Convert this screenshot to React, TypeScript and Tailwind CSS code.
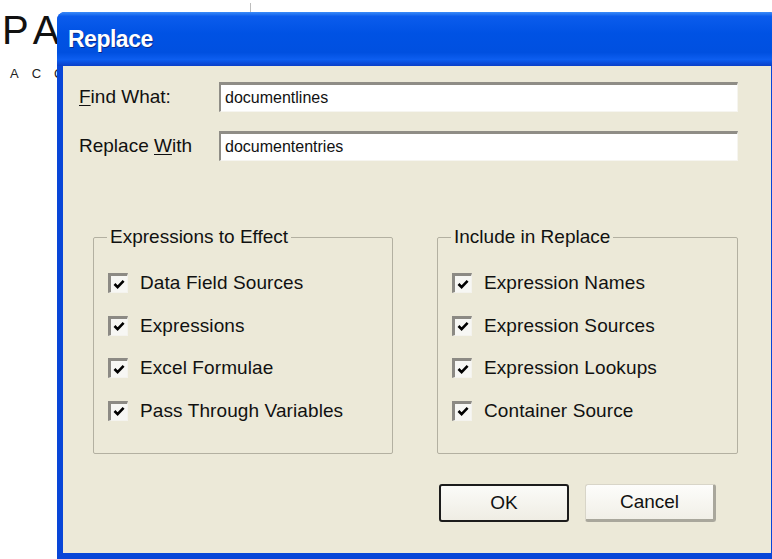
import React from "react";

const sans = "font-['Liberation_Sans',Arial,sans-serif]";

function CheckBox() {
  return (
    <span className="flex h-[20px] w-[20px] shrink-0 items-center justify-center border-t-[3px] border-l-[3px] border-b border-r border-t-[#8c8a84] border-l-[#8c8a84] border-b-[#f4f3ee] border-r-[#f4f3ee] bg-[#f7f7f4]">
      <svg width="12" height="11" viewBox="0 0 12 11">
        <path d="M1.5 5 L4.6 8.2 L10.6 1.8" fill="none" stroke="#000" strokeWidth="2.6" />
      </svg>
    </span>
  );
}

function CheckRow({ label }: { label: string }) {
  return (
    <div className="flex h-[42.5px] items-center gap-[12px]">
      <CheckBox />
      <span className="text-[19px] tracking-[0.1px] text-[#111]">{label}</span>
    </div>
  );
}

function GroupBox({ title, items, width }: { title: string; items: string[]; width: string }) {
  return (
    <fieldset className={`${width} h-[228px] rounded-[2px] border border-[#b3b0a1] pt-[14px]`}>
      <legend className="ml-[13px] px-[3px] text-[19px] leading-[22px] text-[#111]">{title}</legend>
      <div className="pl-[14px]">
        {items.map((it) => (
          <CheckRow key={it} label={it} />
        ))}
      </div>
    </fieldset>
  );
}

function TextBox({ value }: { value: string }) {
  return (
    <div className="flex h-[30px] w-[519px] items-center border-t-[3px] border-l-2 border-b border-r border-t-[#8f8d86] border-l-[#8f8d86] border-b-[#f6f5f0] border-r-[#f6f5f0] bg-white pl-[4px] text-[16px] text-[#111]">
      {value}
    </div>
  );
}

export default function App() {
  return (
    <div className={`relative h-[559px] w-[772px] overflow-hidden bg-white ${sans}`}>
      {/* product logo behind the window */}
      <div className="pl-[2px] pt-[9px]">
        <div className="text-[40px] font-light leading-[42px] tracking-[7px] text-[#111]">PASTEL</div>
        <div className="mt-[15px] pl-[8px] text-[13px] leading-[16px] tracking-[13px] text-[#222]">ACCOUNTING</div>
      </div>
      <div className="absolute left-[250px] top-[3px] h-[10px] w-px bg-[#bdbdbd]" />

      {/* Replace dialog */}
      <div className="absolute left-[57px] top-[12px] flex h-[547px] w-[720px] flex-col overflow-hidden rounded-t-[8px] bg-[#0846d8]">
        <div className="flex h-[54px] shrink-0 items-center bg-[linear-gradient(180deg,#3b8cf8_0%,#0b5cec_8%,#0052e4_40%,#0050e0_75%,#0d5ef0_88%,#0a3fc8_100%)] pl-[11px]">
          <span className="text-[23px] font-bold tracking-[-0.5px] text-white [text-shadow:1px_1px_0_#0a2a8a]">
            Replace
          </span>
        </div>
        <div className="mx-[6px] mb-[6px] flex-1 bg-[#ece9d8] pl-4 pt-4">
          <div className="flex items-center">
            <span className="w-[140px] text-[19px] text-[#111]">
              <span className="underline underline-offset-2">F</span>ind What:
            </span>
            <TextBox value="documentlines" />
          </div>
          <div className="mt-[19px] flex items-center">
            <span className="w-[140px] text-[19px] text-[#111]">
              Replace <span className="underline underline-offset-2">W</span>ith
            </span>
            <TextBox value="documententries" />
          </div>

          <div className="ml-[14px] mt-[65px] flex gap-[44px]">
            <GroupBox
              width="w-[300px]"
              title="Expressions to Effect"
              items={["Data Field Sources", "Expressions", "Excel Formulae", "Pass Through Variables"]}
            />
            <GroupBox
              width="w-[301px]"
              title="Include in Replace"
              items={["Expression Names", "Expression Sources", "Expression Lookups", "Container Source"]}
            />
          </div>

          <div className="ml-[360px] mt-[30px] flex gap-[16px]">
            <button className="flex h-[38px] w-[130px] items-center justify-center rounded-[3px] border-2 border-[#1c1c1c] bg-[linear-gradient(180deg,#fbfbf8,#efede4)] text-[19px] text-[#111]">
              OK
            </button>
            <button className="flex h-[38px] w-[131px] items-center justify-center rounded-[3px] border border-[#d8d5c8] border-b-[3px] border-r-[3px] border-b-[#a9a79c] border-r-[#a9a79c] bg-[linear-gradient(180deg,#fdfdfb,#f1efe7)] text-[19px] text-[#111]">
              Cancel
            </button>
          </div>
        </div>
      </div>
    </div>
  );
}
